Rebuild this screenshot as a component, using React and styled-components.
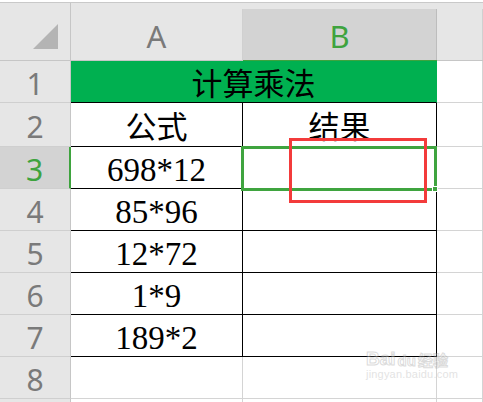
import React from "react";
import styled, { createGlobalStyle } from "styled-components";

const GlobalStyle = createGlobalStyle`
  html, body {
    margin: 0;
    padding: 0;
    background: #ffffff;
    overflow: hidden;
  }
  * {
    box-sizing: border-box;
  }
`;

const Sheet = styled.div`
  position: relative;
  width: 483px;
  height: 402px;
  overflow: hidden;
  background: #ffffff;
`;

const TopStrip = styled.div`
  height: 3px;
  background: #ffffff;
  border-bottom: 1px solid #c9c9c9;
`;

const Row = styled.div`
  display: flex;
  height: ${(p) => p.h}px;
`;

const Corner = styled.div`
  width: 71px;
  flex: none;
  background: #e6e6e6;
  border-right: 1px solid #c6c6c6;
  border-bottom: 1px solid #c6c6c6;
  padding: 21px 0 0 33px;
`;

const ColHead = styled.div`
  flex: ${(p) => (p.w ? "none" : "1")};
  width: ${(p) => (p.w ? `${p.w}px` : "auto")};
  background: #e6e6e6;
  border-bottom: 1px solid ${(p) => (p.active ? "#3ea33e" : "#c6c6c6")};
  display: flex;
  flex-direction: column;
  justify-content: flex-end;
`;

const ColLabel = styled.div`
  height: 51px;
  display: flex;
  align-items: center;
  justify-content: center;
  background: ${(p) => (p.active ? "#d3d3d3" : "transparent")};
  border-right: 1px solid ${(p) => (p.active ? "#bdbdbd" : "#d0d0d0")};
  color: ${(p) => (p.active ? "#3ea33e" : "#7a7a7a")};
  font-family: "Noto Sans", "Liberation Sans", sans-serif;
  font-size: 31px;
  line-height: 1;
  padding-top: 4px;
`;

const RowHead = styled.div`
  width: 71px;
  flex: none;
  display: flex;
  align-items: center;
  justify-content: center;
  background: ${(p) => (p.active ? "#d3d3d3" : "#e6e6e6")};
  border-right: ${(p) => (p.active ? "2px solid #3ea33e" : "1px solid #c6c6c6")};
  border-bottom: 1px solid #cfcfcf;
  color: ${(p) => (p.active ? "#3ea33e" : "#7a7a7a")};
  font-family: "Noto Sans", "Liberation Sans", sans-serif;
  font-size: 30px;
  line-height: 1;
  padding-top: 5px;
`;

const Cell = styled.div`
  flex: ${(p) => (p.w ? "none" : "1")};
  width: ${(p) => (p.w ? `${p.w}px` : "auto")};
  display: flex;
  align-items: center;
  justify-content: center;
  background: ${(p) => (p.fill ? "#00b050" : "#ffffff")};
  border-right: 1px solid ${(p) => p.rc || "#d4d4d4"};
  border-bottom: 1px solid ${(p) => p.bc || "#d4d4d4"};
  color: #000000;
  font-family: ${(p) =>
    p.cjk
      ? `"Noto Sans CJK SC", "Noto Sans", sans-serif`
      : `"Liberation Serif", "DejaVu Serif", serif`};
  font-size: ${(p) => (p.cjk ? "31px" : "33px")};
  line-height: 1;
  padding-top: ${(p) => (p.cjk ? "0" : "5px")};
  white-space: nowrap;
`;

const Selection = styled.div`
  position: absolute;
  left: 241px;
  top: 146px;
  width: 196px;
  height: 45px;
  border: 3px solid #3fa43f;
  pointer-events: none;
`;

const Handle = styled.div`
  position: absolute;
  left: 432px;
  top: 186px;
  width: 6px;
  height: 6px;
  background: #3fa43f;
  border: 1px solid #ffffff;
`;

const RedMark = styled.div`
  position: absolute;
  left: 289px;
  top: 138px;
  width: 138px;
  height: 65px;
  border: 3px solid #f33b3b;
`;

const Watermark = styled.div`
  position: absolute;
  left: 366px;
  top: 349px;
  display: flex;
  flex-direction: column;
  gap: 1px;
  opacity: 0.35;
  pointer-events: none;
`;

const MarkLine = styled.div`
  display: flex;
  align-items: flex-end;
  gap: 2px;
`;

const MarkWord = styled.span`
  font-family: "Liberation Sans", "Noto Sans CJK SC", sans-serif;
  font-weight: 700;
  font-size: ${(p) => p.size}px;
  line-height: 1;
  color: #ffffff;
  -webkit-text-stroke: 1px #9a9a9a;
`;

const MarkUrl = styled.span`
  font-family: "Liberation Sans", sans-serif;
  font-size: 11px;
  line-height: 1;
  color: #b0b0b0;
  letter-spacing: 0.2px;
`;

const W_A = 172;
const W_B = 194;

const data = [
  { n: 1, h: 42 },
  { n: 2, h: 44, a: "公式", b: "结果", cjk: true },
  { n: 3, h: 42, a: "698*12", active: true },
  { n: 4, h: 42, a: "85*96" },
  { n: 5, h: 42, a: "12*72" },
  { n: 6, h: 42, a: "1*9" },
  { n: 7, h: 42, a: "189*2" },
  { n: 8, h: 42, empty: true },
  { n: "", h: 4, empty: true },
];

export default function App() {
  return (
    <>
      <GlobalStyle />
      <Sheet>
        <TopStrip />
        <Row h={58}>
          <Corner>
            <svg width="26" height="26" viewBox="0 0 26 26">
              <polygon points="25,0 25,25 0,25" fill="#b4b4b4" />
            </svg>
          </Corner>
          <ColHead w={W_A}>
            <ColLabel>A</ColLabel>
          </ColHead>
          <ColHead w={W_B} active>
            <ColLabel active>B</ColLabel>
          </ColHead>
          <ColHead>
            <ColLabel />
          </ColHead>
        </Row>

        {data.map((r, i) => {
          if (r.n === 1) {
            return (
              <Row key={i} h={r.h}>
                <RowHead>{r.n}</RowHead>
                <Cell w={W_A + W_B} fill="1" cjk rc="#00b050" bc="#000000">
                  计算乘法
                </Cell>
                <Cell />
              </Row>
            );
          }
          const line = r.empty ? "#d4d4d4" : "#000000";
          return (
            <Row key={i} h={r.h}>
              <RowHead active={r.active}>{r.n}</RowHead>
              <Cell w={W_A} cjk={r.cjk} rc={line} bc={line}>
                {r.a}
              </Cell>
              <Cell w={W_B} cjk={r.cjk} rc={line} bc={line}>
                {r.b}
              </Cell>
              <Cell />
            </Row>
          );
        })}

        <Selection />
        <Handle />
        <RedMark />

        <Watermark>
          <MarkLine>
            <MarkWord size={19}>Bai</MarkWord>
            <MarkWord size={15}>du</MarkWord>
            <MarkWord size={15}>经验</MarkWord>
          </MarkLine>
          <MarkUrl>jingyan.baidu.com</MarkUrl>
        </Watermark>
      </Sheet>
    </>
  );
}
